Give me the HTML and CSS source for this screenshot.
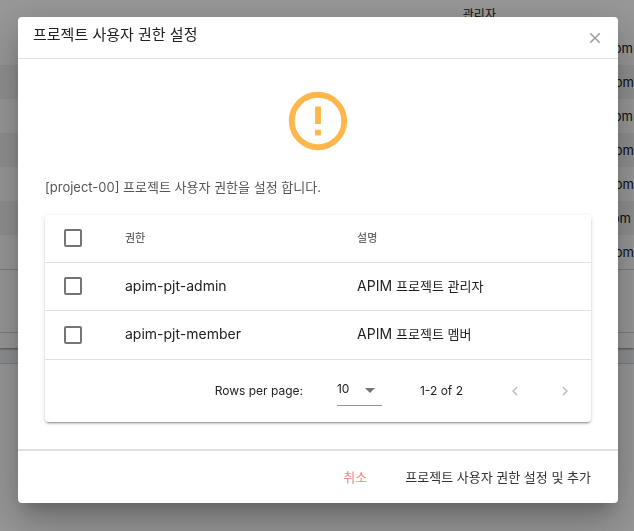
FILE: index.html
```html
<!DOCTYPE html>
<html lang="ko">
<head>
<meta charset="utf-8">
<meta name="viewport" content="width=device-width, initial-scale=1">
<title>프로젝트 사용자 권한 설정</title>
<link rel="stylesheet" href="styles.css">
</head>
<body>
<main class="page">
  <section class="users">
    <div class="user-row user-row-first"><span class="role">관리자</span></div>
    <div class="user-row"><span class="mail">om</span></div>
    <div class="user-row striped"><span class="mail mail-long">om</span></div>
    <div class="user-row"><span class="mail">om</span></div>
    <div class="user-row striped"><span class="mail mail-long">om</span></div>
    <div class="user-row"><span class="mail mail-long">om</span></div>
    <div class="user-row striped"><span class="mail mail-short">om</span></div>
    <div class="user-row"><span class="mail mail-long">om</span></div>
    <div class="users-actions"></div>
    <div class="users-end"></div>
  </section>
  <div class="page-strip"></div>
</main>

<div class="overlay">
  <div class="dialog" role="dialog" aria-modal="true" aria-labelledby="dialog-title">
    <header class="dialog-header">
      <h1 class="dialog-title" id="dialog-title">프로젝트 사용자 권한 설정</h1>
      <button class="icon-button close" type="button" aria-label="닫기">
        <svg width="18" height="18" viewBox="0 0 24 24"><path d="M19 6.41 17.59 5 12 10.59 6.41 5 5 6.41 10.59 12 5 17.59 6.41 19 12 13.41 17.59 19 19 17.59 13.41 12z"/></svg>
      </button>
    </header>

    <div class="dialog-body">
      <svg class="alert-icon" width="70" height="70" viewBox="0 0 24 24" aria-hidden="true"><path d="M11 15h2v2h-2zm0-8h2v6h-2zm1-5C6.47 2 2 6.5 2 12a10 10 0 0 0 10 10 10 10 0 0 0 10-10A10 10 0 0 0 12 2m0 18a8 8 0 0 1-8-8 8 8 0 0 1 8-8 8 8 0 0 1 8 8 8 8 0 0 1-8 8"/></svg>
      <p class="message">[project-00] 프로젝트 사용자 권한을 설정 합니다.</p>

      <div class="card">
        <table class="roles">
          <thead>
            <tr>
              <th class="col-check"><input type="checkbox" aria-label="전체 선택"></th>
              <th class="col-name">권한</th>
              <th>설명</th>
            </tr>
          </thead>
          <tbody>
            <tr>
              <td class="col-check"><input type="checkbox" id="role-admin"></td>
              <td><label for="role-admin">apim-pjt-admin</label></td>
              <td>APIM <span class="ko">프로젝트 관리자</span></td>
            </tr>
            <tr>
              <td class="col-check"><input type="checkbox" id="role-member"></td>
              <td><label for="role-member">apim-pjt-member</label></td>
              <td>APIM <span class="ko">프로젝트 멤버</span></td>
            </tr>
          </tbody>
        </table>
        <div class="pager">
          <label for="page-size">Rows per page:</label>
          <span class="select">
            <select id="page-size"><option>10</option></select>
            <svg class="caret" width="24" height="24" viewBox="0 0 24 24" aria-hidden="true"><path d="m7 10 5 5 5-5z"/></svg>
          </span>
          <span class="range">1-2 of 2</span>
          <button class="icon-button" type="button" disabled aria-label="이전">
            <svg width="18" height="18" viewBox="0 0 24 24"><path d="M15.41 16.58 10.83 12l4.58-4.59L14 6l-6 6 6 6z"/></svg>
          </button>
          <button class="icon-button" type="button" disabled aria-label="다음">
            <svg width="18" height="18" viewBox="0 0 24 24"><path d="M8.59 16.58 13.17 12 8.59 7.41 10 6l6 6-6 6z"/></svg>
          </button>
        </div>
      </div>
    </div>

    <footer class="dialog-footer">
      <button class="text-button cancel" type="button">취소</button>
      <button class="text-button" type="button">프로젝트 사용자 권한 설정 및 추가</button>
    </footer>
  </div>
</div>
</body>
</html>
```
FILE: styles.css
```css
* {
  box-sizing: border-box;
}

body {
  margin: 0;
  background: #fff;
  color: #212121;
  font-family: Inter, "Noto Sans CJK KR", sans-serif;
  font-size: 14px;
  line-height: 20px;
  overflow: hidden;
}

button,
select {
  font: inherit;
  color: inherit;
  border: 0;
  padding: 0;
  background: none;
}

/* Page behind the dialog */

.users {
  position: relative;
  z-index: 1;
  color: #000;
  box-shadow: 0 1px 2px rgba(0, 0, 0, .5);
}

.user-row {
  display: flex;
  align-items: center;
  height: 34px;
  font-size: 13px;
}

.user-row-first {
  height: 31px;
  padding-left: 73%;
  font-size: 12px;
  align-items: flex-start;
  padding-top: 5px;
}

.striped {
  background: #f0f0f0;
}

.mail {
  margin-left: auto;
  padding-right: 1px;
}

.mail-long {
  padding-right: 0;
}

.mail-short {
  padding-right: 3px;
}

.users-actions {
  height: 64px;
  border: solid #d0d0d0;
  border-width: 1px 0;
}

.users-end {
  height: 15px;
}

.page-strip {
  height: 16px;
  background: #eceff1;
  border-bottom: 1px solid #c8ccd0;
}

/* Dialog */

.overlay {
  position: fixed;
  inset: 0;
  z-index: 2;
  display: flex;
  align-items: flex-start;
  justify-content: center;
  padding: 17px 16px 17px 18px;
  background: rgba(33, 33, 33, .46);
}

.dialog {
  width: 100%;
  max-width: 600px;
  border-radius: 4px;
  background: #fff;
  box-shadow: 0 11px 15px -7px rgba(0, 0, 0, .2),
    0 24px 38px 3px rgba(0, 0, 0, .14),
    0 9px 46px 8px rgba(0, 0, 0, .12);
}

.dialog-header {
  display: flex;
  justify-content: space-between;
  height: 42px;
  padding: 6px 14px 0 15px;
  border-bottom: 1px solid #e0e0e0;
}

.dialog-title {
  margin: 0;
  font-size: 15px;
  font-weight: 400;
  line-height: 24px;
}

.icon-button {
  display: flex;
  align-items: center;
  justify-content: center;
  width: 18px;
  height: 18px;
  fill: #757575;
}

.icon-button:disabled {
  fill: #bdbdbd;
}

.close {
  margin-top: 6px;
  fill: #9e9e9e;
}

.dialog-body {
  padding: 27px;
}

.alert-icon {
  display: block;
  margin: 0 auto;
  fill: #ffb74d;
}

.message {
  margin: 21px 0 18px;
  color: #555;
  font-size: 13px;
}

.card {
  border-radius: 4px;
  box-shadow: 0 3px 1px -2px rgba(0, 0, 0, .2),
    0 2px 2px 0 rgba(0, 0, 0, .14),
    0 1px 5px 0 rgba(0, 0, 0, .12);
}

.roles {
  width: 100%;
  table-layout: fixed;
  border-collapse: separate;
  border-spacing: 0;
}

.roles th,
.roles td {
  height: 48px;
  padding: 0 16px 2px;
  text-align: left;
  border-bottom: 1px solid #e0e0e0;
}

.roles tbody tr:last-child td {
  border-bottom: 0;
}

.roles th {
  color: #666;
  font-size: 11px;
  font-weight: 500;
}

.roles .col-check {
  width: 64px;
  padding: 0 19px 1px;
}

.col-name {
  width: 42.5%;
}

.ko {
  font-size: 13px;
}

input[type="checkbox"] {
  appearance: none;
  display: block;
  width: 18px;
  height: 18px;
  margin: 0;
  border: 2px solid #757575;
  border-radius: 2px;
}

.pager {
  display: flex;
  align-items: center;
  justify-content: flex-end;
  height: 63px;
  padding-right: 17px;
  border-top: 1px solid #e0e0e0;
  font-size: 12px;
}

.select {
  position: relative;
  width: 45px;
  margin: 0 38px 0 34px;
  border-bottom: 1px solid #949494;
}

.select select {
  display: block;
  appearance: none;
  width: 100%;
  height: 28px;
  padding-bottom: 3px;
}

.caret {
  position: absolute;
  top: 1px;
  right: 0;
  fill: #757575;
  pointer-events: none;
}

.range {
  margin-right: 43px;
}

.pager .icon-button + .icon-button {
  margin-left: 32px;
}

.dialog-footer {
  display: flex;
  align-items: center;
  justify-content: flex-end;
  gap: 38px;
  height: 54px;
  padding-right: 27px;
  border-top: 2px solid #e0e0e0;
}

.text-button {
  color: #333;
  font-size: 13px;
}

.cancel {
  color: #ff7b7b;
}
```
